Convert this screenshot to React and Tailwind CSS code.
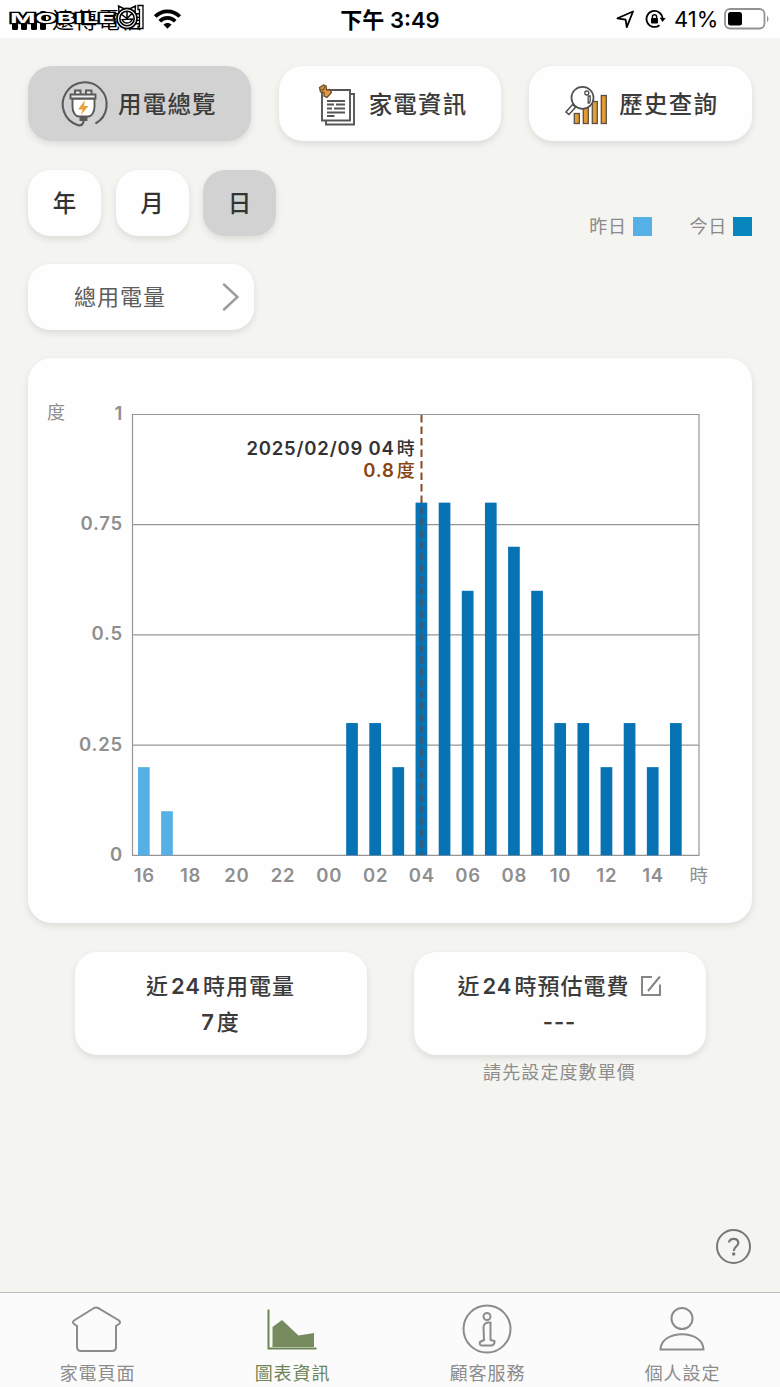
import React from 'react';

const LIGHT = '#55b1e5';
const DARK = '#0873b4';

const bars = [
  [0, 0.2], [1, 0.1], [9, 0.3], [10, 0.3], [11, 0.2], [12, 0.8], [13, 0.8], [14, 0.6],
  [15, 0.8], [16, 0.7], [17, 0.6], [18, 0.3], [19, 0.3], [20, 0.2], [21, 0.3], [22, 0.2], [23, 0.3],
];
const hours = ['16', '18', '20', '22', '00', '02', '04', '06', '08', '10', '12', '14'];
const levels = ['1', '0.75', '0.5', '0.25', '0'];

const cardShadow = 'shadow-[0_3px_7px_rgba(0,0,0,0.10)]';

function Watermark() {
  return (
    <svg className="absolute left-2 top-1 h-8 w-[138px]" viewBox="0 0 138 32">
      <text x="2" y="19" textLength="105" lengthAdjust="spacingAndGlyphs" fontSize="13.5" fontWeight="700"
        fill="#fff" stroke="#000" strokeWidth="2.4" paintOrder="stroke" strokeLinejoin="miter">MOBILE</text>
      <path d="M130 1.500h5v23h-5v-2h1.500v-17h-1.500z" fill="#fff" stroke="#000" strokeWidth="1.300" />
      <path d="m111 8-.5-6 5 2.500h7l5-2.500-.5 6" fill="#fff" stroke="#000" strokeWidth="1.400" />
      <circle cx="119" cy="14.500" r="10" fill="#fff" stroke="#000" strokeWidth="1.600" />
      <circle cx="119" cy="14.500" r="7.200" fill="none" stroke="#000" strokeWidth="1.600" />
      <path d="m113 10 6 4.500 5-5M119 14.500V8" fill="none" stroke="#000" strokeWidth="1.500" />
      <path d="M114 15.500c2 4.500 8 5 10.500-.5z" fill="#fff" stroke="#000" strokeWidth="1.300" />
    </svg>
  );
}

function StatusBar() {
  return (
    <header className="flex h-[38px] shrink-0 items-center bg-[#fefefe] text-black">
      <div className="relative flex h-full w-[340px] items-center">
        <svg className="ml-3 mt-0.5 h-[19px] w-[34px]" viewBox="0 0 34 19">
          <rect x="0" y="12" width="6" height="7" rx="1.500" />
          <rect x="9" y="9" width="6" height="10" rx="1.500" />
          <rect x="19" y="5" width="6" height="14" rx="1.500" />
          <rect x="28" y="0" width="6" height="19" rx="1.500" />
        </svg>
        <span className="ml-1.5 mt-0.5 w-[101px] whitespace-nowrap text-[22px] tracking-[1px]">遠傳電信</span>
        <svg className="h-[22px] w-[29px]" viewBox="0 0 30 22" fill="none" stroke="#000" strokeWidth="3.800">
          <path d="M2.300 8.500c7-7.300 18.400-7.300 25.400 0" />
          <path d="M7 13.300c4.400-4.700 11.600-4.700 16 0" />
          <path d="m15 21-4.200-4.300c2.300-2.200 6.100-2.200 8.400 0z" fill="#000" stroke="none" />
        </svg>
        <Watermark />
      </div>
      <div className="w-[100px] whitespace-nowrap pt-0.5 text-center text-[22px] font-semibold leading-8">下午 3:49</div>
      <div className="flex flex-1 items-center justify-end pr-2.5">
        <svg className="h-5 w-5" viewBox="0 0 20 20" fill="none" stroke="#000" strokeWidth="1.800" strokeLinejoin="round">
          <path d="M2.500 9.300 18 2.500l-6.200 15.600-1.200-7.500z" />
        </svg>
        <svg className="ml-2.5 h-5 w-[21px]" viewBox="0 0 21 20" fill="none" stroke="#000" strokeWidth="1.800">
          <path d="M14.500 16.200a8 8 0 1 1 3-6.700" />
          <path d="m14.800 8.800 5.900.2-3.200 4z" fill="#000" stroke="none" />
          <rect x="6" y="9" width="7" height="5.500" rx="1" fill="#000" stroke="none" />
          <path d="M7.400 9.500V7.800a2.100 2.100 0 0 1 4.200 0v1.700" strokeWidth="1.400" />
        </svg>
        <span className="ml-2 w-[50px] whitespace-nowrap pt-px text-[22px]">41%</span>
        <svg className="h-[22px] w-[46px]" viewBox="0 0 46 22">
          <rect x="1" y="1" width="39.500" height="19.500" rx="5" fill="#fff" stroke="#929292" strokeWidth="1.800" />
          <rect x="4" y="4" width="14" height="13.500" rx="2.500" />
          <path d="M43 7.500q3 3.300 0 7z" fill="#929292" />
        </svg>
      </div>
    </header>
  );
}

function PlugIcon() {
  return (
    <svg className="h-[46px] w-[46px] overflow-visible" viewBox="0 0 46 46" fill="none" stroke="#5a5a5a" strokeWidth="1.900">
      <path d="M35.500 42.500A22 22 0 1 0 18 44.300c4 .5 5.500-1.500 5.500-4.300v-3" strokeWidth="2.100" />
      <path d="M12.500 17.500v8c0 6 3 10 6.500 10h9c3.500 0 6.500-4 6.500-10v-8z" fill="#fff" />
      <path d="M10.500 13.500h25v4h-25zM15 9.500h5.500v4H15zM26 9.500h5.500v4H26z" fill="#ededed" />
      <path d="M20.500 36h6v3h-6z" fill="#5a5a5a" />
      <path d="m25 19-7 9.500h4.500L21 34l7.500-9H24z" fill="#e8a33a" stroke="none" />
    </svg>
  );
}

function PaperIcon() {
  return (
    <svg className="h-[46px] w-[42px]" viewBox="0 0 42 46" fill="none" stroke="#555" strokeWidth="1.900">
      <path d="M11 13h28v30.500H11z" fill="#fff" />
      <path d="M7 9h28v30.500H7z" fill="#fff" />
      <path d="M12 20h18M12 23.500h7M21 23.500h9M12 27.500h5M19 27.500h11M12 31.500h18M12 35h7.500" strokeWidth="1.800" />
      <path d="m4.500 6.500 4-2.500 2.500 1 .5 4 3-.5 2 3-4.500 5-3-1.500v-3.500L5.500 11z" fill="#de9c42" stroke="#6d4b28" strokeWidth="1.300" />
      <path d="m5 8.500 3 .5 2-3.500" stroke="#6d4b28" strokeWidth="1.200" />
    </svg>
  );
}

function SearchChartIcon() {
  return (
    <svg className="mt-0.5 h-10 w-[42px]" viewBox="0 0 42 40" fill="none" stroke="#5a5148" strokeWidth="1.300">
      <g fill="#e59b2e">
        <rect x="9.300" y="28.500" width="5" height="10" />
        <rect x="18.300" y="22.500" width="5" height="16" />
        <rect x="27.300" y="16.500" width="5" height="22" />
        <rect x="36.300" y="10.500" width="5" height="28" />
      </g>
      <g stroke="#505050">
        <path d="m1 27 6.500-7.500 3 2.800L4 29.500z" fill="#fff" strokeWidth="1.500" />
        <path d="m8.500 20 2-2" strokeWidth="3" />
        <circle cx="17.500" cy="12.800" r="11" fill="#fff" strokeWidth="1.700" />
        <circle cx="21.800" cy="8" r="2" />
        <path d="M23.200 11h2v5l-1 2h-1z" />
      </g>
    </svg>
  );
}

function TopTab({ label, active, icon }) {
  return (
    <button className={`flex h-[75px] items-center rounded-[24px] text-[23.5px] font-medium tracking-[1.2px] text-[#3b3b3b] ${cardShadow} ${active ? 'bg-[#d2d2d2]' : 'bg-[#fefefe]'}`}>
      <span className="flex w-[90px] justify-end pr-3">{icon}</span>
      <span className="whitespace-nowrap pt-0.5 leading-8">{label}</span>
    </button>
  );
}

function Period({ label, active }) {
  return (
    <button className={`h-[66px] w-[73px] rounded-[22px] pt-0.5 text-[23.5px] font-medium text-[#333] ${cardShadow} ${active ? 'bg-[#d2d2d2]' : 'bg-[#fefefe]'}`}>
      {label}
    </button>
  );
}

function Chart() {
  return (
    <section className={`mt-7 h-[565px] rounded-[24px] bg-[#fefefe] ${cardShadow}`}>
      <svg className="h-[565px] w-[724px]" viewBox="28 358 724 565" fontSize="18.5" fontWeight="600" letterSpacing="0.8">
        <g stroke="#969696" strokeWidth="1.200" fill="none">
          {levels.map((v, i) => <path key={v} d={`M132.500 ${414.500 + i * 110.200}H699`} />)}
          <path d="M132.500 414v442M699 414v442" />
        </g>
        {bars.map(([i, v]) => (
          <rect key={i} x={138 + i * 23.130} y={855.300 - v * 440.800} width="11.700" height={v * 440.800} fill={i < 8 ? LIGHT : DARK} />
        ))}
        <path d="M421.500 415v88" stroke="#874a25" strokeWidth="2" strokeDasharray="7.500 4" />
        <path d="M421.500 503v352" stroke="#4d5260" strokeWidth="2.200" strokeDasharray="7.500 4" strokeDashoffset="7.500" />
        <g fill="#8f8f8f">
          {levels.map((v, i) => <text key={v} x="123" y={420 + i * 110.200} textAnchor="end">{v}</text>)}
          {hours.map((h, i) => <text key={h} x={144.300 + i * 46.250} y="881.500" textAnchor="middle">{h}</text>)}
          <text x="47" y="419" fontSize="18" fontWeight="400">度</text>
          <text x="689.500" y="881.500" fontWeight="400">時</text>
        </g>
        <text x="415.500" y="455" fill="#333" textAnchor="end">2025/02/09 04<tspan dx="2" fontSize="18" fontWeight="500">時</tspan></text>
        <text x="415.500" y="477" fill="#874512" textAnchor="end">0.8<tspan dx="2" fontSize="18" fontWeight="500">度</tspan></text>
      </svg>
    </section>
  );
}

function Legend({ label, swatch }) {
  return (
    <span className="flex items-center gap-1.5 text-[18px] leading-[19px] tracking-[0.7px] text-[#8a8a8a]">
      {label}
      <i className={`h-[19px] w-[19px] ${swatch}`} />
    </span>
  );
}

function NavItem({ label, active, children }) {
  return (
    <a className={`flex flex-col items-center ${active ? 'text-[#6b8557]' : 'text-[#8c8c8c]'}`}>
      <svg className="mr-[3px] mt-2.5 h-[52px] w-[52px]" viewBox="0 0 52 52" fill="none" stroke="currentColor" strokeWidth="2">{children}</svg>
      <span className="mt-[5px] whitespace-nowrap text-[18px] leading-7 tracking-[0.9px]">{label}</span>
    </a>
  );
}

export default function App() {
  return (
    <div lang="zh-TW" className="flex h-[1387px] w-[780px] flex-col overflow-hidden bg-[#f4f4f1] font-[Inter,'Noto_Sans_CJK_TC',sans-serif]">
      <StatusBar />
      <main className="flex flex-1 flex-col px-7 pt-7">
        <div className="grid grid-cols-3 gap-7">
          <TopTab label="用電總覽" active icon={<PlugIcon />} />
          <TopTab label="家電資訊" icon={<PaperIcon />} />
          <TopTab label="歷史查詢" icon={<SearchChartIcon />} />
        </div>
        <div className="mt-[29px] flex justify-between">
          <div className="flex gap-[14.5px]">
            <Period label="年" />
            <Period label="月" />
            <Period label="日" active />
          </div>
          <div className="flex items-end gap-[38px]">
            <Legend label="昨日" swatch="bg-[#55b1e5]" />
            <Legend label="今日" swatch="bg-[#0785bd]" />
          </div>
        </div>
        <button className={`mt-7 flex h-[66px] w-[226px] items-center justify-between rounded-[22px] bg-[#fefefe] pl-[46px] pr-[15px] text-[22px] tracking-[1px] text-[#5c5c5c] ${cardShadow}`}>
          總用電量
          <svg className="h-7 w-[17px]" viewBox="0 0 17 28" fill="none" stroke="#9c9c9c" strokeWidth="2.500" strokeLinecap="round">
            <path d="m2 1.500 13.500 12.500L2 26.500" />
          </svg>
        </button>
        <Chart />
        <div className="mt-[29px] flex justify-center gap-[47px]">
          <div className={`flex h-[103px] w-[292px] flex-col items-center rounded-[22px] bg-[#fefefe] pt-4 text-[22px] font-medium leading-9 tracking-[1px] text-[#3b3b3b] ${cardShadow}`}>
            <div>近<b className="mx-0.5 font-semibold">24</b>時用電量</div>
            <div><b className="mr-0.5 font-semibold">7</b>度</div>
          </div>
          <div>
            <div className={`flex h-[103px] w-[292px] flex-col items-center rounded-[22px] bg-[#fefefe] pt-4 text-[22px] font-medium leading-9 tracking-[1px] text-[#3b3b3b] ${cardShadow}`}>
              <div className="flex items-center">
                <span>近<b className="mx-0.5 font-semibold">24</b>時預估電費</span>
                <svg className="ml-2.5 h-[22px] w-[22px]" viewBox="0 0 22 22" fill="none" stroke="#858585" strokeWidth="2">
                  <path d="M12 2H2v18h18V9.500M20 1.500 8 16" />
                </svg>
              </div>
              <div className="font-semibold">---</div>
            </div>
            <p className="mt-1 text-center text-[18px] leading-7 tracking-[1.1px] text-[#8d8d8d]">請先設定度數單價</p>
          </div>
        </div>
        <div className="mb-[28px] mt-auto flex justify-end pr-px">
          <button className="flex h-[35px] w-[35px] items-center justify-center rounded-full border-[2.5px] border-[#777] text-[#777]">
            <svg className="h-5 w-4" viewBox="0 0 16 20" fill="none" stroke="currentColor" strokeWidth="2.200">
              <path d="M3 5.500C3.300 2.800 5 1.800 7.500 1.800c3 0 4.800 1.700 4.800 4.100 0 3.700-4.500 3.600-4.500 8.100" />
              <circle cx="7.700" cy="17" r="1.700" fill="currentColor" stroke="none" />
            </svg>
          </button>
        </div>
      </main>
      <nav className="grid h-[95px] shrink-0 grid-cols-4 border-t border-[#bdbdbd] bg-[#fbfbfb]">
        <NavItem label="家電頁面">
          <path d="M24 5q2-1 4 0l21 12.500q2 2 0 3.500l-3 2v21q0 4-4 4H11q-4 0-4-4V23l-3-2q-2-2 0-3.500z" />
        </NavItem>
        <NavItem label="圖表資訊" active>
          <path d="M3.500 6.500V45.500h48" />
          <path d="M7.500 44V24l9.500-7L33.500 32.500l15.500-2.500v14z" fill="#768c5f" stroke="none" />
        </NavItem>
        <NavItem label="顧客服務">
          <circle cx="27" cy="26" r="23.500" />
          <circle cx="27" cy="13.500" r="3.500" />
          <path d="M23.500 24q.5-4 4.500-4.500h2.500v17.500l4 1v1q0 3-3 3.500H22q-3 0-2-3.500l4-2z" strokeLinejoin="round" />
        </NavItem>
        <NavItem label="個人設定">
          <circle cx="27" cy="15.500" r="10.500" />
          <path d="M5.500 46.500C6 26 48 26 48.500 46.500z" />
        </NavItem>
      </nav>
    </div>
  );
}
